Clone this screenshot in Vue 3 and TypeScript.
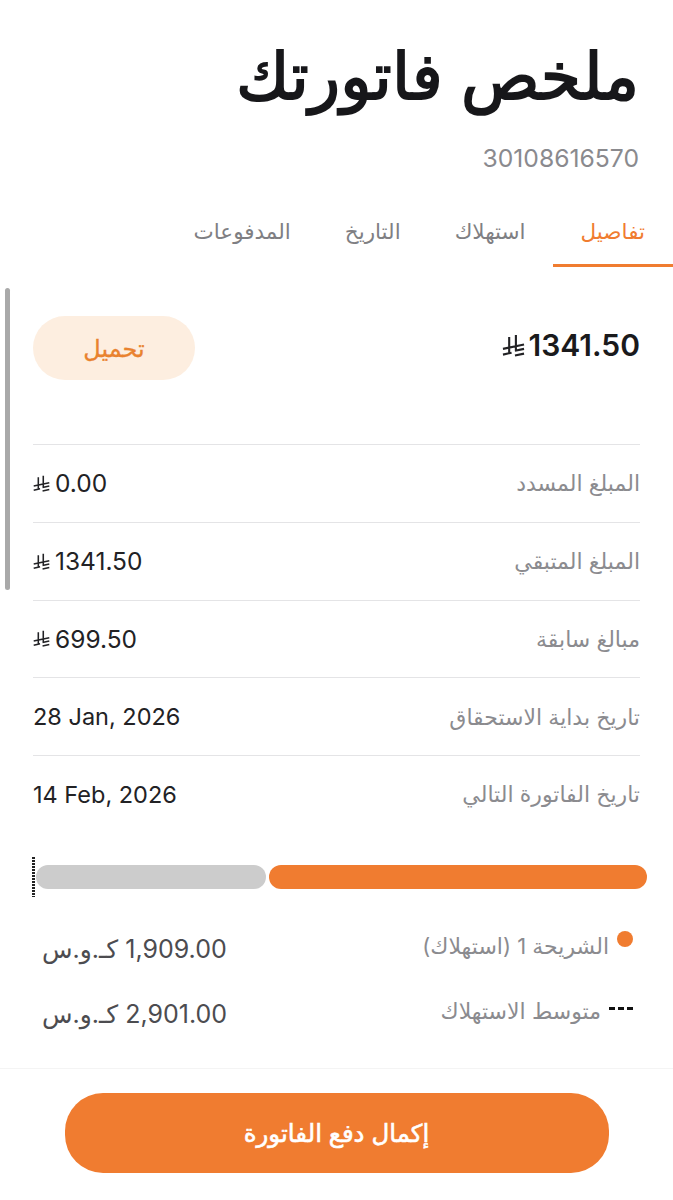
<template>
	<div class='page' dir='rtl'>
		<header class='head'>
			<h1 class='title'>ملخص فاتورتك</h1>
			<div class='account' dir='ltr'>30108616570</div>
		</header>

		<nav class='tabs'>
			<div v-for='(tab, i) in tabs' :key='tab' class='tab' :class='{ active: i === 0 }'>{{ tab }}</div>
		</nav>

		<main class='content'>
			<div class='scrollbar'></div>

			<section class='total'>
				<div class='total-amount' dir='ltr'>
					<svg class='riyal big' viewBox='0 0 24 24'><use href='#riyal' /></svg>
					<span>1341.50</span>
				</div>
				<button class='download'>تحميل</button>
			</section>

			<section class='rows'>
				<div v-for='row in rows' :key='row.label' class='row'>
					<span class='row-label'>{{ row.label }}</span>
					<span class='row-value' :class='{ money: row.money }' dir='ltr'>
						<svg v-if='row.money' class='riyal' viewBox='0 0 24 24'><use href='#riyal' /></svg>
						{{ row.value }}
					</span>
				</div>
			</section>

			<section class='usage'>
				<div class='bar' dir='ltr'>
					<div class='marker'></div>
					<div class='bar-rest' :style='{ width: restWidth + "px" }'></div>
					<div class='bar-used'></div>
				</div>
				<div class='legend'>
					<div v-for='item in legend' :key='item.label' class='legend-row'>
						<div class='legend-label'>
							<span v-if='item.dot' class='dot'></span>
							<span v-else class='dashes'><i></i><i></i><i></i></span>
							<span>{{ item.label }}</span>
						</div>
						<div class='legend-value'><bdi dir='ltr'>{{ item.value }}</bdi> كـ.و.س</div>
					</div>
				</div>
			</section>
		</main>

		<footer class='foot'>
			<button class='pay'>إكمال دفع الفاتورة</button>
		</footer>

		<svg class='defs' width='0' height='0'>
			<symbol id='riyal' viewBox='0 0 24 24'>
				<path d='M7.500 3v17M14.500 1v17M1 15.500l22-4.500M1 21.500l9-2M13.500 17.500l9.500-2M13.500 22.500l9.500-2' fill='none' stroke='currentColor' stroke-width='2.200' />
			</symbol>
		</svg>
	</div>
</template>

<script setup lang="ts">
type Row = { label: string; value: string; money: boolean };

const tabs: string[] = ['تفاصيل', 'استهلاك', 'التاريخ', 'المدفوعات'];

const rows: Row[] = [
	{ label: 'المبلغ المسدد', value: '0.00', money: true },
	{ label: 'المبلغ المتبقي', value: '1341.50', money: true },
	{ label: 'مبالغ سابقة', value: '699.50', money: true },
	{ label: 'تاريخ بداية الاستحقاق', value: '28 Jan, 2026', money: false },
	{ label: 'تاريخ الفاتورة التالي', value: '14 Feb, 2026', money: false },
];

const legend = [
	{ label: 'الشريحة 1 (استهلاك)', value: '1,909.00', dot: true },
	{ label: 'متوسط الاستهلاك', value: '2,901.00', dot: false },
];

const restWidth = 230;
</script>

<style>
html, body {
	margin: 0;
	background: #fff;
}
</style>

<style scoped>
.page {
	position: relative;
	width: 673px;
	height: 1200px;
	overflow: hidden;
	background: #fff;
	font-family: Inter, "DejaVu Sans", sans-serif;
	color: #1c1c1e;
}

.head {
	padding: 36px 34px 0;
}

.title {
	margin: 0;
	font-size: 65px;
	line-height: 80px;
	font-weight: 400;
	-webkit-text-stroke: 1.8px #17171a;
	color: #17171a;
}

.account {
	margin-top: 27px;
	text-align: right;
	font-size: 24.7px;
	line-height: 30px;
	color: #8a8a8e;
}

.tabs {
	display: flex;
	margin-top: 42px;
	height: 52px;
}

.tab {
	padding: 0 27px;
	font-size: 21.5px;
	line-height: 32px;
	color: #7f7f83;
	white-space: nowrap;
}

.tab.active {
	padding: 0 28px;
	color: #f07c30;
	border-bottom: 3px solid #f07c30;
	height: 49px;
}

.content {
	position: relative;
	height: 801px;
	border-bottom: 1px solid #f4f4f4;
}

.scrollbar {
	position: absolute;
	left: 5px;
	top: 21px;
	width: 5px;
	height: 302px;
	border-radius: 3px;
	background: #a9a9a9;
}

.total {
	display: flex;
	justify-content: space-between;
	align-items: center;
	padding: 49px 33px 0;
	height: 64px;
}

.total-amount {
	display: flex;
	align-items: center;
	gap: 4px;
	margin-bottom: 6px;
	font-size: 30px;
	font-weight: 600;
	color: #1a1a1c;
}

.download {
	width: 162px;
	height: 64px;
	border: 0;
	border-radius: 32px;
	background: #fdeee0;
	color: #e9822f;
	font-family: inherit;
	font-size: 24px;
	font-weight: 400;
	-webkit-text-stroke: 0.3px #e9822f;
}

.rows {
	margin: 64px 33px 0;
}

.row {
	display: flex;
	justify-content: space-between;
	align-items: center;
	height: 76.75px;
	border-top: 1px solid #e4e4e6;
}

.row-label {
	font-size: 22px;
	color: #8b8b8f;
}

.row-value {
	display: flex;
	align-items: center;
	gap: 5px;
	font-size: 23.5px;
	color: #222225;
}

.row-value.money {
	font-size: 24.5px;
}

.riyal {
	width: 17px;
	height: 17px;
	color: #222225;
}

.riyal.big {
	width: 23px;
	height: 23px;
}

.usage {
	margin-top: 32px;
}

.bar {
	position: relative;
	display: flex;
	gap: 3px;
	margin: 0 26px 0 36px;
	height: 24px;
}

.marker {
	position: absolute;
	left: -4px;
	top: -8px;
	width: 3px;
	height: 40px;
	background: repeating-linear-gradient(#222 0 2px, transparent 2px 3px);
}

.bar-rest {
	background: #cccccc;
	border-radius: 12px;
}

.bar-used {
	flex: 1;
	background: #f07c30;
	border-radius: 12px;
}

.legend {
	margin: 42px 40px 0 42px;
}

.legend-row {
	display: flex;
	justify-content: space-between;
	align-items: flex-start;
	height: 65px;
}

.legend-label {
	display: flex;
	align-items: flex-start;
	gap: 8px;
	font-size: 22px;
	line-height: 30px;
	color: #8b8b8f;
}

.dot {
	width: 16px;
	height: 16px;
	border-radius: 50%;
	background: #f07c30;
}

.dashes {
	display: flex;
	gap: 3px;
	width: 24px;
	margin-top: 11px;
}

.dashes i {
	width: 6px;
	height: 3px;
	background: #111;
}

.legend-value {
	padding-top: 1px;
	font-size: 25px;
	line-height: 34px;
	color: #4c4c50;
}

.foot {
	display: flex;
	justify-content: center;
	padding-top: 24px;
}

.pay {
	width: 544px;
	height: 80px;
	border: 0;
	border-radius: 38px;
	background: #f07c30;
	color: #fff;
	font-family: inherit;
	font-size: 24.5px;
	font-weight: 400;
	-webkit-text-stroke: 0.6px #fff;
}

.defs {
	position: absolute;
}
</style>
